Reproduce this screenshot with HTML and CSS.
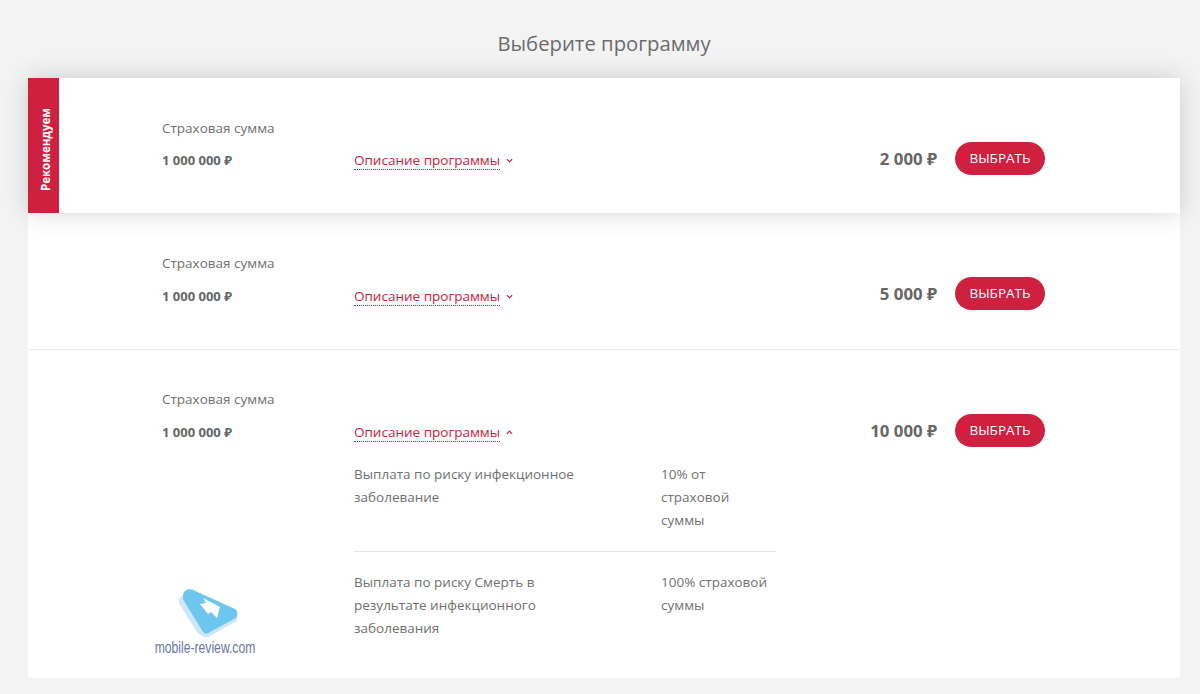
FILE: index.html
```html
<!DOCTYPE html>
<html lang="ru">
  <head>
    <meta charset="UTF-8" />
    <title>Выберите программу</title>
    <link rel="stylesheet" href="styles.css">
  </head>
  <body>
    <h1 class="title">Выберите программу</h1>
    <div class="programs">
      <!-- Recommended -->
      <div class="program program-top">
        <div class="ribbon"><span>Рекомендуем</span></div>
        <div class="sum">
          <div class="sum-label">Страховая сумма</div>
          <div class="sum-value">1 000 000 ₽</div>
        </div>
        <div class="descr">
          <div class="descr-head">
            <a class="descr-link">Описание программы</a>
            <svg class="chevron" viewBox="0 0 8 5"><path d="M1 1l3 3 3-3" /></svg>
          </div>
        </div>
        <div class="price">2 000 ₽</div>
        <button class="select-btn">ВЫБРАТЬ</button>
      </div>

      <div class="program">
        <div class="sum">
          <div class="sum-label">Страховая сумма</div>
          <div class="sum-value">1 000 000 ₽</div>
        </div>
        <div class="descr">
          <div class="descr-head">
            <a class="descr-link">Описание программы</a>
            <svg class="chevron" viewBox="0 0 8 5"><path d="M1 1l3 3 3-3" /></svg>
          </div>
        </div>
        <div class="price">5 000 ₽</div>
        <button class="select-btn">ВЫБРАТЬ</button>
      </div>

      <!-- Opened program -->
      <div class="program program-open">
        <div class="sum">
          <div class="sum-label">Страховая сумма</div>
          <div class="sum-value">1 000 000 ₽</div>
        </div>
        <div class="descr">
          <div class="descr-head">
            <a class="descr-link">Описание программы</a>
            <svg class="chevron" viewBox="0 0 8 5"><path d="M1 4l3-3 3 3" /></svg>
          </div>
          <div class="risk">
            <div>Выплата по риску инфекционное заболевание</div>
            <div>10% от страховой суммы</div>
          </div>
          <div class="risk">
            <div>Выплата по риску Смерть в результате инфекционного заболевания</div>
            <div>100% страховой суммы</div>
          </div>
        </div>
        <div class="price">10 000 ₽</div>
        <button class="select-btn">ВЫБРАТЬ</button>
      </div>
    </div>

    <!-- Watermark -->
    <div class="watermark">
      <svg class="watermark-logo" viewBox="0 0 60 52">
        <path fill="#cfe6f8" d="M2 7L0 11c0 2 0 3 1 5l15 24c3 5 8 9 13 8l29-16V26z" />
        <path fill="#6cc6ee" d="M6 2c2-2 5-2 8-1l42 19c3 2 3 7 1 9L31 43c-3 2-5 2-7 0L5 12c-2-3-1-8 1-10z" />
        <path fill="#fff" d="M24 9l17 9-3 11-6-6-3 2-8-10 6-1z" />
      </svg>
      <span class="watermark-text">mobile-review.com</span>
    </div>
  </body>
</html>
```

FILE: styles.css
```css
/* Reset & Global Styles */
* {
  box-sizing: border-box;
  margin: 0;
  padding: 0;
}
body {
  background: #f3f3f3;
  font-family: "Open Sans", "Noto Sans", sans-serif;
  color: #707070;
  font-size: 13.5px;
  height: 694px;
  overflow: hidden;
  padding: 0 20px 0 28px;
  position: relative;
}

/* Title */
.title {
  font-size: 20.3px;
  font-weight: 400;
  line-height: 28px;
  text-align: center;
  padding-top: 29px;
  height: 78px;
  color: #6c6c6c;
}

/* Program list */
.programs {
  background: #fff;
  height: 600px;
}
.program {
  display: flex;
  align-items: flex-start;
  height: 137px;
  padding: 39px 135px 0 134px;
  border-bottom: 1px solid #e8e8e8;
  position: relative;
}
.program-top {
  height: 135px;
  border-bottom: 0;
  box-shadow: 0 0 24px rgba(0, 0, 0, 0.16);
  z-index: 1;
}
.program-open {
  height: auto;
  border-bottom: 0;
}

/* Ribbon */
.ribbon {
  position: absolute;
  left: 0;
  top: 0;
  bottom: 0;
  width: 31px;
  padding: 9px 0 0 4px;
  background: #cf203f;
  color: #fff;
  font-size: 11.5px;
  font-weight: 700;
  display: flex;
  align-items: center;
  justify-content: center;
}
.ribbon span {
  writing-mode: vertical-rl;
  transform: rotate(180deg);
}

/* Sum */
.sum {
  width: 192px;
  flex-shrink: 0;
}
.program-open .sum {
  margin-top: -1px;
}
.sum-label {
  line-height: 22px;
}
.sum-value {
  margin-top: 11px;
  line-height: 22px;
  font-size: 13px;
  font-weight: 700;
  color: #666;
}
.program-top .sum-value {
  margin-top: 10px;
}

/* Description */
.descr {
  width: 422px;
  flex-shrink: 0;
  padding-top: 35px;
}
.program-top .descr,
.program-open .descr {
  padding-top: 34px;
}
.descr-head {
  display: flex;
  align-items: center;
  line-height: 22px;
}
.descr-link {
  color: #cf203f;
  border-bottom: 1px dotted #cf203f;
  line-height: 18px;
}
.chevron {
  width: 7px;
  height: 5px;
  margin-left: 6px;
  fill: none;
  stroke: #cf203f;
  stroke-width: 1.4;
}
.risk {
  display: grid;
  grid-template-columns: 307px 1fr;
  line-height: 23px;
  padding: 21px 0 19px;
  border-bottom: 1px solid #e8e8e8;
}
.risk > div:first-child {
  padding-right: 60px;
}
.risk:last-child {
  padding-top: 19px;
  border-bottom: 0;
}

/* Price & Button */
.price {
  flex: 1;
  text-align: right;
  font-size: 16.8px;
  font-weight: 700;
  line-height: 24px;
  padding-top: 30px;
  color: #666;
}
.select-btn {
  width: 90px;
  height: 33px;
  margin: 25px 0 0 18px;
  padding-bottom: 1px;
  border: 0;
  border-radius: 17px;
  background: #cf203f;
  color: #fff;
  font-family: inherit;
  font-size: 13.5px;
  font-weight: 500;
  flex-shrink: 0;
}

/* Watermark */
.watermark {
  position: absolute;
  left: 135px;
  top: 589px;
  width: 140px;
  text-align: center;
}
.watermark-logo {
  display: block;
  width: 60px;
  height: 52px;
  margin-left: 44px;
}
.watermark-text {
  display: block;
  margin-top: -1px;
  font-family: "Liberation Sans", sans-serif;
  font-size: 16px;
  line-height: 16px;
  color: #6a76a6;
  transform: scaleX(0.76);
  white-space: nowrap;
}
```
